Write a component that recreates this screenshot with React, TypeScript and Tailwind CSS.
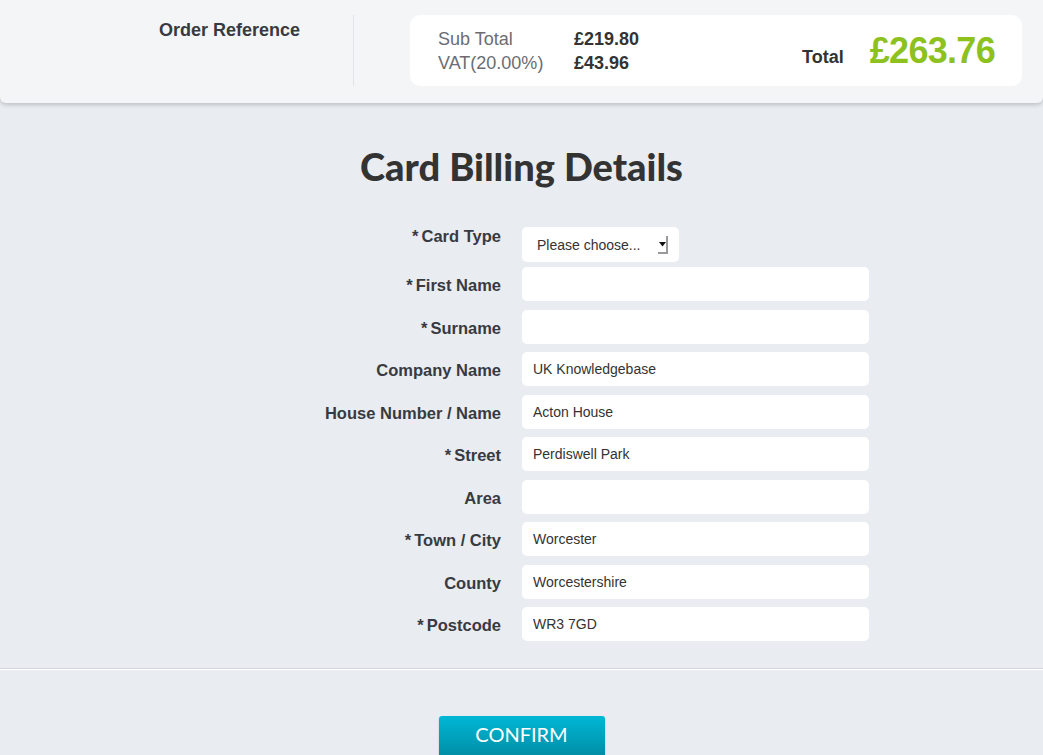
import React, { useState } from "react";

interface Field {
  label: string;
  required?: boolean;
  value: string;
}

const fields: Field[] = [
  { label: "First Name", required: true, value: "" },
  { label: "Surname", required: true, value: "" },
  { label: "Company Name", value: "UK Knowledgebase" },
  { label: "House Number / Name", value: "Acton House" },
  { label: "Street", required: true, value: "Perdiswell Park" },
  { label: "Area", value: "" },
  { label: "Town / City", required: true, value: "Worcester" },
  { label: "County", value: "Worcestershire" },
  { label: "Postcode", required: true, value: "WR3 7GD" },
];

function Label({ text, required, className = "" }: { text: string; required?: boolean; className?: string }) {
  return (
    <label className={"w-[200px] shrink-0 text-right text-[16.5px] font-bold text-[#383a42] leading-[20px] " + className}>
      {required && <span className="mr-[3px]">*</span>}
      {text}
    </label>
  );
}

export default function App() {
  const [values, setValues] = useState<string[]>(fields.map((f) => f.value));
  const [cardType, setCardType] = useState("");

  return (
    <div className="min-h-[755px] bg-[#e9ecf0] font-['Liberation_Sans',Arial,sans-serif] overflow-hidden">
      {/* Summary header */}
      <div className="h-[103px] bg-[#f4f5f7] rounded-b-[6px] shadow-[0_2px_4px_rgba(0,0,0,0.18)] flex items-start pt-[15px]">
        <div className="w-[354px] shrink-0 h-[71px] border-r border-[#e2e3e6] pl-[159px]">
          <span className="text-[18px] font-bold text-[#383a42] leading-[20px] block mt-[5px]">Order Reference</span>
        </div>
        <div className="ml-[56px] w-[612px] h-[71px] bg-white rounded-[10px] flex items-center pl-[28px] pr-[27px]">
          <div className="grid grid-cols-[136px_auto] text-[18px] leading-[24px] mt-[1px]">
            <span className="text-[#6a6d74]">Sub Total</span>
            <span className="font-bold text-[#333]">£219.80</span>
            <span className="text-[#6a6d74]">VAT(20.00%)</span>
            <span className="font-bold text-[#333]">£43.96</span>
          </div>
          <div className="ml-auto flex items-center">
            <span className="text-[18px] font-bold text-[#333] mt-[13px]">Total</span>
            <span className="ml-[26px] text-[36px] font-bold text-[#8dc11e] tracking-[-0.7px] leading-none">£263.76</span>
          </div>
        </div>
      </div>

      {/* Form */}
      <h1 className="mt-[41px] text-center text-[38px] font-black text-[#333] font-['Lato',sans-serif] leading-[44px]">
        Card Billing Details
      </h1>

      <div className="mt-[39px] ml-[301px] flex flex-col">
        <div className="flex items-start gap-[21px]">
          <Label text="Card Type" required className="pt-[-1px] mt-[-1px]" />
          <div className="relative w-[157px] h-[35px] bg-white rounded-[5px]">
            <select
              value={cardType}
              onChange={(e) => setCardType(e.target.value)}
              className="appearance-none w-full h-full bg-transparent rounded-[5px] pl-[15px] pt-[2px] text-[14px] text-[#333] outline-none"
            >
              <option value="">Please choose...</option>
              <option value="visa">Visa</option>
              <option value="mastercard">Mastercard</option>
            </select>
            <span className="pointer-events-none absolute right-[11px] top-[9px] w-[10px] h-[18px] bg-white border-r-2 border-b-2 border-[#9a9a9a] flex items-center justify-center">
              <svg width="7" height="5" viewBox="0 0 7 5">
                <path d="M0 0h7L3.5 4.5z" fill="#111" />
              </svg>
            </span>
          </div>
        </div>

        <div className="mt-[5px] flex flex-col gap-[8.5px]">
          {fields.map((f, i) => (
            <div key={f.label} className="flex items-center gap-[21px]">
              <Label text={f.label} required={f.required} className="pt-[2px]" />
              <input
                value={values[i]}
                onChange={(e) => {
                  const next = [...values];
                  next[i] = e.target.value;
                  setValues(next);
                }}
                className="w-[347px] h-[34px] bg-white rounded-[5px] pl-[11px] text-[14px] text-[#333] outline-none"
              />
            </div>
          ))}
        </div>
      </div>

      <div className="mt-[27px] border-t border-[#d2d4d9] border-b border-b-white" />

      <div className="mt-[46px] flex justify-center">
        <button className="w-[166px] h-[42px] rounded-[3px] bg-gradient-to-b from-[#00b8d6] to-[#008ea6] border-b-2 border-[#006a7c] text-white text-[20px] font-['Lato',sans-serif] pb-[4px] shadow-[0_1px_2px_rgba(0,0,0,0.2)]">
          CONFIRM
        </button>
      </div>
    </div>
  );
}
